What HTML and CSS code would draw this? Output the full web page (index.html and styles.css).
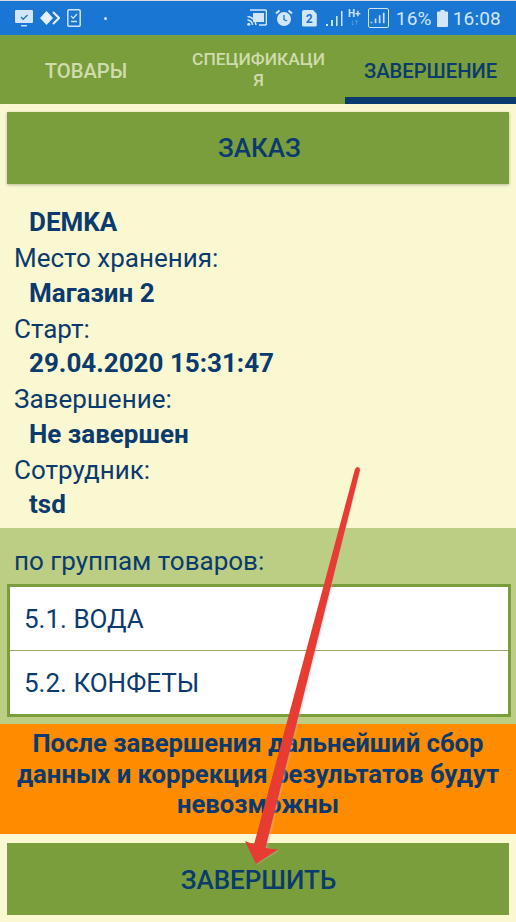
FILE: index.html
```html
<!DOCTYPE html>
<html lang="ru">
<head>
<meta charset="utf-8">
<title>Завершение</title>
<link rel="stylesheet" href="styles.css">
</head>
<body>
<div class="phone">
  <header class="status">
    <div class="status-left">
      <svg class="ic" width="18" height="17" viewBox="0 0 18 17"><path d="M1 0h16a1 1 0 0 1 1 1v11a1 1 0 0 1-1 1H1a1 1 0 0 1-1-1V1a1 1 0 0 1 1-1z" fill="#d3e6f8"/><path d="M6 15h6v1.4H6z" fill="#d3e6f8"/><path d="M6 7l2.2 2.2L12.5 5" fill="none" stroke="#1976d2" stroke-width="1.4"/></svg>
      <svg class="ic" width="20" height="14" viewBox="0 0 20 14"><path d="M6.5 0l6.5 7-6.5 7L0 7z" fill="#e6f0fa"/><path d="M13 1l6 6-6 6" fill="none" stroke="#e6f0fa" stroke-width="2"/></svg>
      <svg class="ic" width="14" height="18" viewBox="0 0 14 18"><rect x=".8" y=".8" width="12.4" height="16.4" rx="1.2" fill="none" stroke="#cfe3f7" stroke-width="1.5"/><path d="M4 7l2.2 2.2L10 5M4 12.5h6" fill="none" stroke="#cfe3f7" stroke-width="1.3"/></svg>
      <span class="dot"></span>
    </div>
    <div class="status-right">
      <svg class="ic" width="20" height="18" viewBox="0 0 20 18"><path d="M3 1h15a1.500 1.500 0 0 1 1.500 1.500v12A1.500 1.500 0 0 1 18 16h-6" fill="none" stroke="#d3e6f8" stroke-width="1.600"/><rect x="6" y="4" width="11" height="9" fill="#d3e6f8"/><path d="M.5 7.500a9 9 0 0 1 8.500 8.500M.5 11a5.500 5.500 0 0 1 5 5" fill="none" stroke="#d3e6f8" stroke-width="1.600"/><circle cx="1.800" cy="15.200" r="1.500" fill="#d3e6f8"/></svg>
      <svg class="ic ic-alarm" width="18" height="18" viewBox="0 0 18 18"><circle cx="9" cy="10" r="7" fill="#d3e6f8"/><path d="M9 6v4.500l3 1.500" fill="none" stroke="#1976d2" stroke-width="1.300"/><path d="M1 4.500L4.500 1.500M17 4.500L13.500 1.500" stroke="#d3e6f8" stroke-width="2"/></svg>
      <span class="sim">2</span>
      <svg class="ic" width="18" height="17" viewBox="0 0 18 17"><path d="M1 14h2v2H1zM6 10h2v6H6zM11 6h1.600v10H11zM16 1h1.500v15H16z" fill="#cfe3f7"/></svg>
      <span class="net">H+<small>↓↑</small></span>
      <span class="signal"><svg width="22" height="15" viewBox="0 0 22 15"><path d="M2 12h2v2H2zM7 8h2v6H7zM12 4h2v10h-2zM17 1h2v13h-2z" fill="#cfe3f7"/></svg></span>
      <span class="pct">16%</span>
      <svg class="ic" width="11" height="17" viewBox="0 0 11 17"><path d="M3.500 0h4v1.500H10a1 1 0 0 1 1 1V16a1 1 0 0 1-1 1H1a1 1 0 0 1-1-1V2.500a1 1 0 0 1 1-1h2.500z" fill="#d3e6f8"/></svg>
      <span class="clock">16:08</span>
    </div>
  </header>

  <nav class="tabs">
    <div class="tab">ТОВАРЫ</div>
    <div class="tab tab-wrap">СПЕЦИФИКАЦИ<br>Я</div>
    <div class="tab tab-active">ЗАВЕРШЕНИЕ</div>
  </nav>

  <main class="content">
    <div class="bar">ЗАКАЗ</div>
    <div class="info">
      <div class="val">DEMKA</div>
      <div class="lbl">Место хранения:</div>
      <div class="val">Магазин 2</div>
      <div class="lbl">Старт:</div>
      <div class="val">29.04.2020 15:31:47</div>
      <div class="lbl">Завершение:</div>
      <div class="val">Не завершен</div>
      <div class="lbl">Сотрудник:</div>
      <div class="val">tsd</div>
    </div>
    <section class="groups">
      <div class="groups-title">по группам товаров:</div>
      <div class="list">
        <div class="row">5.1. ВОДА</div>
        <div class="row">5.2. КОНФЕТЫ</div>
      </div>
    </section>
    <div class="warn">После завершения дальнейший сбор данных и коррекция результатов будут невозможны</div>
    <div class="bar bar-finish">ЗАВЕРШИТЬ</div>
  </main>

  <svg class="arrow" width="516" height="922" viewBox="0 0 516 922">
    <path d="M358 467.500 L360 469 L267 846 L278 850 L256 864 L245 841 L255 844 L356.500 468z" fill="#b9b9c4" opacity=".35" transform="translate(1 1)"/>
    <path d="M357 467 Q360 467 360 470 L265.500 848 L278 849.500 L256 864 L245 841 L254 844.500 L355 469z" fill="#e63c31"/>
  </svg>
</div>
</body>
</html>
```

FILE: styles.css
```css
* { box-sizing: border-box; }
html, body { margin: 0; padding: 0; }
body { font-family: Roboto, "Liberation Sans", sans-serif; color: #0b3a6e; background: #faf8d0; }
.phone { position: relative; width: 516px; height: 922px; overflow: hidden; display: flex; flex-direction: column; border-top: 1px solid #d8dce0; }

.status { height: 34px; background: #1976d2; display: flex; justify-content: space-between; align-items: center; padding: 0 15px; color: #d3e6f8; }
.status-left { display: flex; align-items: center; gap: 7px; }
.dot { width: 3px; height: 3px; border-radius: 50%; background: #e6f0fa; margin-left: 16px; }
.status-right { display: flex; align-items: center; gap: 5px; }
.ic { display: block; flex: none; }
.ic-alarm { margin-left: 3px; }
.sim { width: 15px; height: 17px; background: #d3e6f8; color: #1976d2; font-size: 12px; font-weight: 700; text-align: center; line-height: 18px; border-radius: 2px; margin: 0 3px 0 4px; clip-path: polygon(0 0, 72% 0, 100% 26%, 100% 100%, 0 100%); }
.net { width: 13px; font-size: 10px; font-weight: 700; line-height: 10px; text-align: center; white-space: nowrap; }
.net small { display: block; font-size: 8px; line-height: 8px; opacity: .6; }
.signal { width: 21px; height: 20px; border: 1px solid #cfe3f7; border-radius: 2px; display: flex; align-items: center; justify-content: center; margin-left: 2px; }
.signal svg { width: 18px; height: 14px; }
.pct, .clock { font-size: 19px; letter-spacing: .2px; }
.pct { margin-left: 2px; }
.clock { margin-left: 0; }

.tabs { height: 69px; background: #7a9e3b; display: grid; grid-template-columns: 172px 173px 171px; }
.tab { display: flex; align-items: center; justify-content: center; text-align: center; color: #cfdcae; font-size: 20.200px; font-weight: 500; line-height: 25px; padding-top: 3px; }
.tab-wrap { font-size: 17.400px; line-height: 21px; padding-top: 1px; }
.tab-active { color: #0b3a6e; border-bottom: 7px solid #0b3a6e; padding-top: 10px; }

.content { flex: 1; display: flex; flex-direction: column; background: #faf8d0; }
.bar { height: 72px; margin: 8px 7px 0; padding-left: 3px; background: #7a9e3b; display: flex; align-items: center; justify-content: center; font-size: 26px; font-weight: 500; box-shadow: 0 1px 3px rgba(0,0,0,.25); }
.info { height: 344px; padding: 22px 15px 0 14px; font-size: 26px; line-height: 35.300px; }
.lbl { padding-top: 1px; }
.val { font-weight: 700; padding-left: 15px; margin-top: -1px; }
.groups { height: 196px; background: #bcce84; padding: 0 5px 0 7px; }
.groups-title { font-size: 26px; line-height: 28px; padding: 19px 0 9px 7px; }
.list { border: 3px solid #7a9e3b; background: #fff; width: 504px; }
.row { height: 63px; display: flex; align-items: center; padding-left: 14px; font-size: 26px; }
.row + .row { height: 64px; border-top: 1px solid #9aa76e; }
.warn { height: 110px; background: #ff8c00; font-size: 25.700px; font-weight: 700; line-height: 30.500px; text-align: center; padding: 4px 15px 0; }
.bar-finish { margin-top: 9px; flex: none; box-shadow: none; padding-top: 2px; padding-left: 1px; }

.arrow { position: absolute; left: 0; top: -1px; pointer-events: none; }
```
